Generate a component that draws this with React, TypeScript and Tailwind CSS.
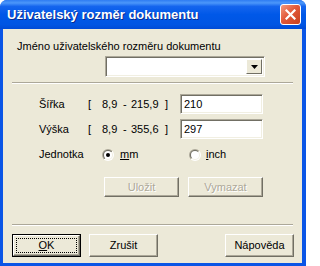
import React from "react";

const btn =
  "flex items-center justify-center bg-[#ECE9D8] border border-t-white border-l-white border-r-[#716F64] border-b-[#716F64] shadow-[inset_-1px_-1px_0_#ACA899] text-[11px] leading-[13px]";

const field =
  "bg-white border border-t-[#ACA899] border-l-[#ACA899] border-r-white border-b-white shadow-[inset_1px_1px_0_#716F64,inset_-1px_-1px_0_#F1EFE2]";

function Radio({ checked }: { checked?: boolean }) {
  return (
    <svg width="12" height="12" viewBox="0 0 12 12">
      <defs>
        <linearGradient id="ro" x1="0" y1="0" x2="1" y2="1">
          <stop offset="0.5" stopColor="#ACA899" />
          <stop offset="0.5" stopColor="#FFFFFF" />
        </linearGradient>
        <linearGradient id="ri" x1="0" y1="0" x2="1" y2="1">
          <stop offset="0.5" stopColor="#716F64" />
          <stop offset="0.5" stopColor="#F1EFE2" />
        </linearGradient>
      </defs>
      <circle cx="6" cy="6" r="6" fill="url(#ro)" />
      <circle cx="6" cy="6" r="5" fill="url(#ri)" />
      <circle cx="6" cy="6" r="4" fill="#FFFFFF" />
      {checked && <circle cx="6" cy="6" r="2" fill="#000000" />}
    </svg>
  );
}

function RangeRow({ label, max, value }: { label: string; max: string; value: string }) {
  return (
    <div className="flex items-center h-[20px]">
      <span className="w-[49px]">{label}</span>
      <span className="w-[14px]">[</span>
      <span className="w-[21px]">8,9</span>
      <span className="w-[8px]">-</span>
      <span className="w-[34px]">{max}</span>
      <span className="w-[15px]">]</span>
      <div className={`${field} w-[83px] h-[20px] flex items-center pl-[3px]`}>{value}</div>
    </div>
  );
}

export default function App() {
  return (
    <div className="w-[306px] h-[266px] flex flex-col rounded-t-[7px] overflow-hidden bg-[#0A55E6] font-['Liberation_Sans',Arial,sans-serif] text-[11px] leading-[13px] text-black">
      {/* Title bar */}
      <div className="h-[29px] shrink-0 flex items-center justify-between pl-[7px] pr-[5px] bg-[linear-gradient(180deg,#2E7CF2_0%,#4C97FA_10%,#1565EE_22%,#0058E8_50%,#0055E3_85%,#004AD6_100%)]">
        <span className="text-white font-bold text-[13px] leading-[16px] mt-[1px] [text-shadow:1px_1px_0_#0A2C8F]">
          Uživatelský rozměr dokumentu
        </span>
        <div className="w-[21px] h-[21px] rounded-[3px] border border-white bg-[linear-gradient(135deg,#F39A7E_0%,#E2593A_45%,#C8401E_100%)] flex items-center justify-center">
          <svg width="11" height="11" viewBox="0 0 11 11">
            <path d="M1.5 1.5 L9.5 9.5 M9.5 1.5 L1.5 9.5" stroke="white" strokeWidth="2.2" strokeLinecap="square" />
          </svg>
        </div>
      </div>

      {/* Body */}
      <div className="flex-1 ml-[3px] mr-[4px] mb-[3px] bg-[#ECE9D8] flex flex-col">
        <div className="pt-[11px] pl-[14px]">Jméno uživatelského rozměru dokumentu</div>
        <div className={`${field} ml-[102px] mt-[3px] w-[160px] h-[21px] flex justify-end items-stretch p-[2px]`}>
          <div className={`${btn} w-[16px] shadow-none`}>
            <svg width="7" height="4" viewBox="0 0 7 4">
              <path d="M0 0 H7 L3.5 4 Z" fill="black" />
            </svg>
          </div>
        </div>
        <div className="ml-[9px] mt-[5px] w-[281px] border-t border-t-[#ACA899] border-b border-b-white" />

        <div className="pl-[36px] mt-[10px] flex flex-col gap-[5px]">
          <RangeRow label="Šířka" max="215,9" value="210" />
          <RangeRow label="Výška" max="355,6" value="297" />
        </div>

        <div className="pl-[36px] mt-[9px] flex items-center h-[13px]">
          <span className="w-[63px]">Jednotka</span>
          <div className="w-[87px] flex items-center">
            <Radio checked />
            <span className="ml-[6px]">
              <span className="underline">m</span>m
            </span>
          </div>
          <div className="flex items-center">
            <Radio />
            <span className="ml-[5px]">
              <span className="underline">i</span>nch
            </span>
          </div>
        </div>

        <div className="ml-[101px] mt-[16px] flex gap-[9px]">
          {["Uložit", "Vymazat"].map((t) => (
            <div key={t} className={`${btn} w-[75px] h-[20px] text-[#ACA899] [text-shadow:1px_1px_0_#FFFFFF]`}>
              {t}
            </div>
          ))}
        </div>

        <div className="ml-[9px] mt-[27px] w-[281px] border-t border-t-[#ACA899] border-b border-b-white" />

        <div className="pl-[9px] mt-[8px] flex">
          <div className="w-[69px] h-[23px] border border-black">
            <div className={`${btn} w-full h-full`}>
              <div className="w-[61px] h-[15px] border border-dotted border-black flex items-center justify-center">
                <span>
                  <span className="underline">O</span>K
                </span>
              </div>
            </div>
          </div>
          <div className={`${btn} ml-[8px] w-[69px] h-[23px]`}>Zrušit</div>
          <div className={`${btn} ml-[67px] w-[69px] h-[23px]`}>Nápověda</div>
        </div>
      </div>
    </div>
  );
}
